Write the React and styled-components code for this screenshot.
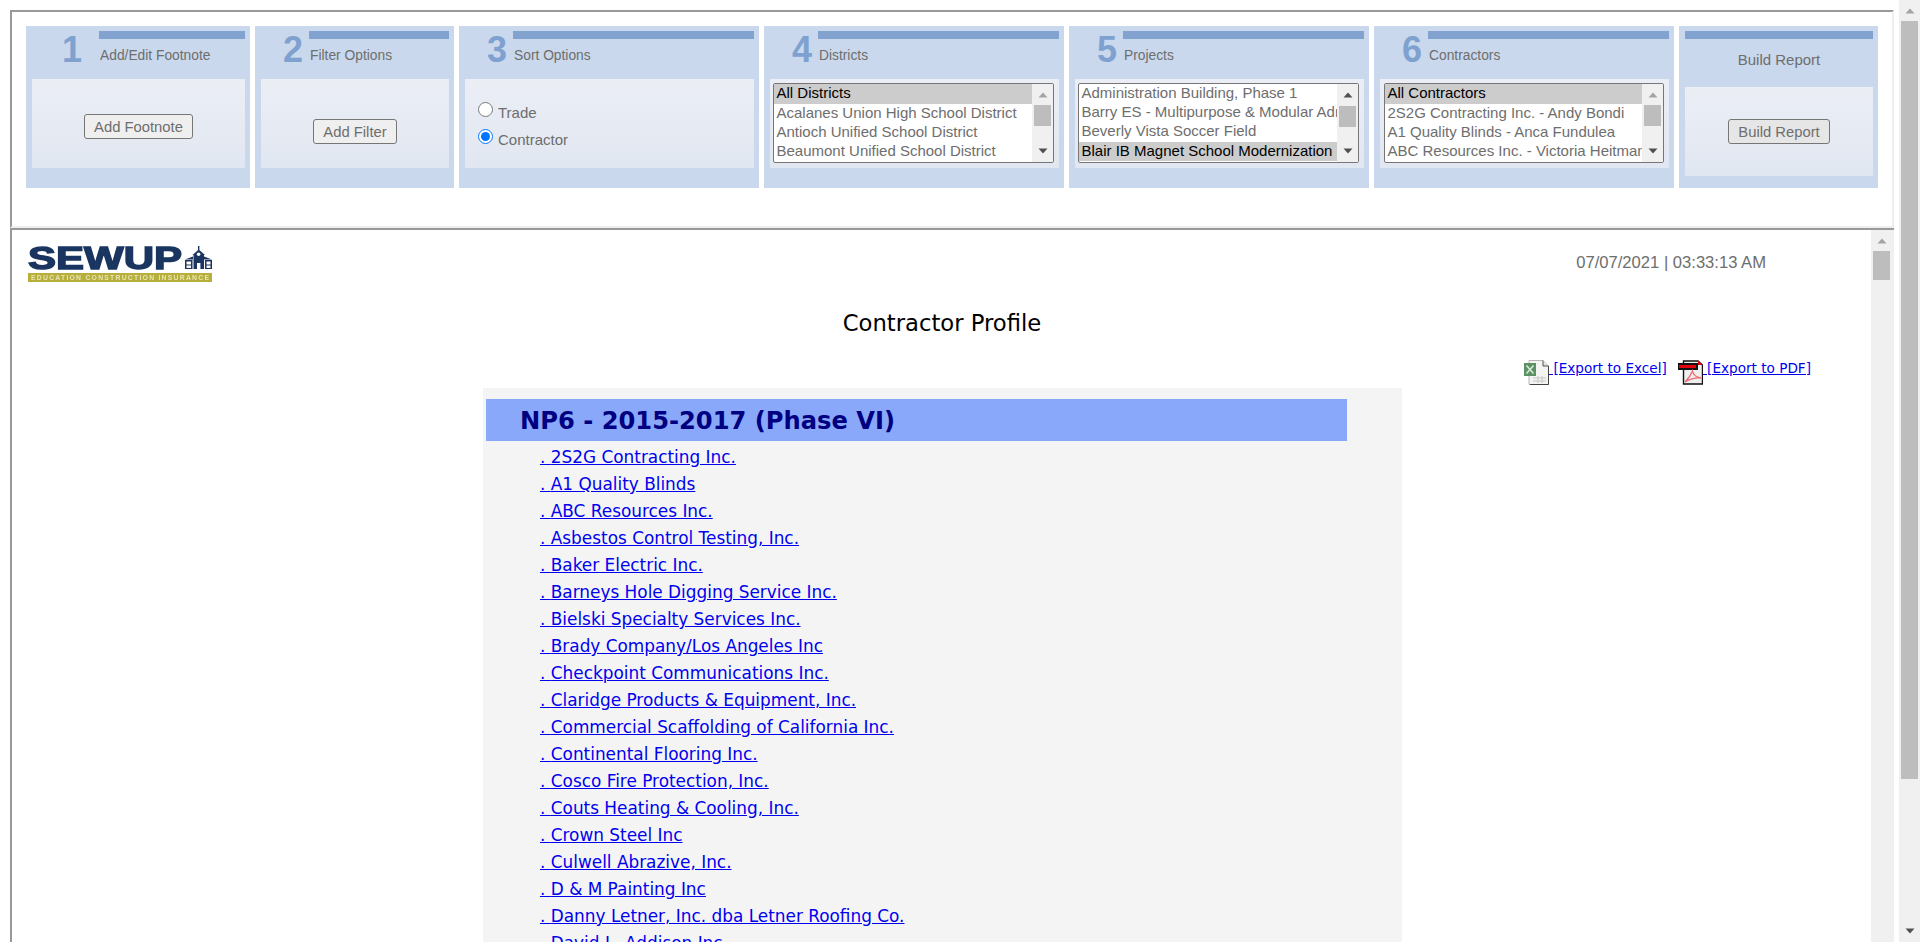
import styled, { createGlobalStyle } from "styled-components"

const GlobalStyle = createGlobalStyle`
html, body {
margin: 0;
padding: 0;
background: #FFFFFF;
overflow: hidden;
}
* {
box-sizing: border-box;
}
`

const ArrowIcon = ({ down, disabled }) => (
    <svg width="10" height="6" viewBox="0 0 10 6">
        <path d={down ? "M0.5 0.5H9.5L5 5.5Z" : "M0.5 5.5H9.5L5 0.5Z"} fill={disabled ? "#A3A3A3" : "#505050"} />
    </svg>
)

const Scrollbar = ({ width, thumbTop, thumbHeight, upDisabled, noDown }) => (
    <Track $width={width}>
        <TrackButton><ArrowIcon disabled={upDisabled} /></TrackButton>
        <Thumb $top={thumbTop} $height={thumbHeight} />
        <TrackSpacer />
        {!noDown && <TrackButton $bottom><ArrowIcon down /></TrackButton>}
    </Track>
)

const ListBox = ({ options, thumbTop, upDisabled }) => (
    <ListFrame>
        <ListOptions>
            {options.map((o) => (
                <ListOption key={o.text} $selected={o.selected} $tall={o.tall}>{o.text}</ListOption>
            ))}
        </ListOptions>
        <Scrollbar width={21} thumbTop={thumbTop} thumbHeight={21} upDisabled={upDisabled} />
    </ListFrame>
)

const StepPanel = ({ width, number, label, numberWidth, numberLeft, children }) => (
    <Panel $width={width}>
        <PanelHead>
            <StepNumber $width={numberWidth} $left={numberLeft}>{number}</StepNumber>
            <HeadText>
                <HeadBar />
                <HeadLabel>{label}</HeadLabel>
            </HeadText>
        </PanelHead>
        {children}
    </Panel>
)

const Logo = () => (
    <LogoSvg width="184" height="36" viewBox="0 0 184 36">
        <text x="0" y="23" fontFamily="Liberation Sans" fontWeight="700" fontSize="32" fill="#1A3560" stroke="#1A3560" strokeWidth="1.4" textLength="154" lengthAdjust="spacingAndGlyphs">SEWUP</text>
        <g fill="#1A3560">
            <rect x="170" y="0" width="1.4" height="4" />
            <path d="M164.5 9L170.7 3.5L177 9Z" />
            <rect x="165.5" y="9" width="10.5" height="14" />
            <path d="M157 13.5L165 10.5V13.5ZM184 13.5L176 10.5V13.5Z" />
            <rect x="157" y="14" width="7.5" height="9" />
            <rect x="177" y="14" width="7" height="9" />
        </g>
        <g fill="#FFFFFF">
            <rect x="168.8" y="6.5" width="3.6" height="3.6" rx="1.8" />
            <rect x="169" y="17" width="3.4" height="6" />
            <rect x="158.5" y="15.5" width="4.5" height="3" />
            <rect x="178.5" y="15.5" width="4" height="3" />
            <rect x="158.5" y="19.5" width="4.5" height="2.4" />
            <rect x="178.5" y="19.5" width="4" height="2.4" />
        </g>
        <rect x="0" y="27" width="184" height="9" fill="#B7AF3C" />
        <text x="3" y="34" fontFamily="Liberation Sans" fontWeight="700" fontSize="6.8" fill="#E8E4B0" textLength="178" lengthAdjust="spacing">EDUCATION CONSTRUCTION INSURANCE</text>
    </LogoSvg>
)

const ExcelIcon = () => (
    <svg width="25" height="25" viewBox="0 0 25 25">
        <path d="M5 0.5H19L24.5 6V24.5H5Z" fill="#F4F4F2" stroke="#B5B5B5" />
        <path d="M19 0.5V6H24.5" fill="#E2E2E2" stroke="#555555" />
        <path d="M24.5 6V24.5H6" fill="none" stroke="#444444" />
        <rect x="0" y="3" width="12" height="13" fill="#5C9263" />
        <path d="M2.5 5.5L9.5 13.5M9.5 5.5L2.5 13.5" stroke="#D8E8D8" strokeWidth="1.6" />
        <path d="M9 18H22M9 21H22M14 16V23M18 16V23" stroke="#C6C6C6" strokeWidth="1" />
    </svg>
)

const PdfIcon = () => (
    <svg width="25" height="25" viewBox="0 0 25 25">
        <path d="M5.5 1H20L24.5 5V24H5.5Z" fill="#EFEFEF" stroke="#111111" strokeWidth="1.4" />
        <path d="M20 0.5L24.5 5H20Z" fill="#E0000F" />
        <rect x="0" y="3" width="20" height="7" fill="#111111" />
        <rect x="1" y="5" width="17" height="3" fill="#E5000F" />
        <path d="M7 22C10 19 13 15 14.5 11C15 14 17 17 23 18C18 17.5 12 19 7 22Z" fill="none" stroke="#EE6B73" strokeWidth="1.3" />
    </svg>
)

const districts = [
    { text: "All Districts", selected: true, tall: true },
    { text: "Acalanes Union High School District" },
    { text: "Antioch Unified School District" },
    { text: "Beaumont Unified School District" },
]

const projects = [
    { text: "Administration Building, Phase 1" },
    { text: "Barry ES - Multipurpose & Modular Administration" },
    { text: "Beverly Vista Soccer Field", tall: true },
    { text: "Blair IB Magnet School Modernization", selected: true },
]

const contractorOptions = [
    { text: "All Contractors", selected: true, tall: true },
    { text: "2S2G Contracting Inc. - Andy Bondi" },
    { text: "A1 Quality Blinds - Anca Fundulea" },
    { text: "ABC Resources Inc. - Victoria Heitman" },
]

const contractors = [
    "2S2G Contracting Inc.",
    "A1 Quality Blinds",
    "ABC Resources Inc.",
    "Asbestos Control Testing, Inc.",
    "Baker Electric Inc.",
    "Barneys Hole Digging Service Inc.",
    "Bielski Specialty Services Inc.",
    "Brady Company/Los Angeles Inc",
    "Checkpoint Communications Inc.",
    "Claridge Products & Equipment, Inc.",
    "Commercial Scaffolding of California Inc.",
    "Continental Flooring Inc.",
    "Cosco Fire Protection, Inc.",
    "Couts Heating & Cooling, Inc.",
    "Crown Steel Inc",
    "Culwell Abrazive, Inc.",
    "D & M Painting Inc",
    "Danny Letner, Inc. dba Letner Roofing Co.",
    "David L. Addison Inc.",
]

const App = () => {
    return (
        <Page>
            <GlobalStyle />
            <Frames>
                <TopFrame>
                    <StepPanel width={224} number="1" label="Add/Edit Footnote" numberWidth={67} numberLeft={30}>
                        <PanelBody $top={35}>
                            <ActionButton>Add Footnote</ActionButton>
                        </PanelBody>
                    </StepPanel>
                    <StepPanel width={199} number="2" label="Filter Options" numberWidth={48} numberLeft={22}>
                        <PanelBody $top={40}>
                            <ActionButton>Add Filter</ActionButton>
                        </PanelBody>
                    </StepPanel>
                    <StepPanel width={300} number="3" label="Sort Options" numberWidth={48} numberLeft={22}>
                        <RadioBody>
                            <RadioRow>
                                <RadioInput type="radio" name="sort" readOnly />
                                <RadioText>Trade</RadioText>
                            </RadioRow>
                            <RadioRow>
                                <RadioInput type="radio" name="sort" defaultChecked />
                                <RadioText>Contractor</RadioText>
                            </RadioRow>
                        </RadioBody>
                    </StepPanel>
                    <StepPanel width={300} number="4" label="Districts" numberWidth={48} numberLeft={22}>
                        <ListBody $left={3}>
                            <ListBox options={districts} thumbTop={0} upDisabled />
                        </ListBody>
                    </StepPanel>
                    <StepPanel width={300} number="5" label="Projects" numberWidth={48} numberLeft={22}>
                        <ListBody $left={3}>
                            <ListBox options={projects} thumbTop={1} />
                        </ListBody>
                    </StepPanel>
                    <StepPanel width={300} number="6" label="Contractors" numberWidth={48} numberLeft={22}>
                        <ListBody $left={4}>
                            <ListBox options={contractorOptions} thumbTop={0} upDisabled />
                        </ListBody>
                    </StepPanel>
                    <Panel $width={199}>
                        <HeadBar />
                        <BuildTitle>Build Report</BuildTitle>
                        <PanelBody $top={32}>
                            <ActionButton $dark>Build Report</ActionButton>
                        </PanelBody>
                    </Panel>
                </TopFrame>
                <ReportFrame>
                    <ReportPane>
                        <ReportTop>
                            <Logo />
                            <DateText>07/07/2021 | 03:33:13 AM</DateText>
                        </ReportTop>
                        <ReportTitle>Contractor Profile</ReportTitle>
                        <ExportRow>
                            <ExportItem>
                                <ExcelIcon />
                                <ExportLink href="#">{"\u00a0[Export to Excel]"}</ExportLink>
                            </ExportItem>
                            <ExportItem>
                                <PdfIcon />
                                <ExportLink href="#">{"\u00a0[Export to PDF]"}</ExportLink>
                            </ExportItem>
                        </ExportRow>
                        <ReportBox>
                            <PhaseHeader>NP6 - 2015-2017 (Phase VI)</PhaseHeader>
                            <ContractorList>
                                {contractors.map((name) => (
                                    <ContractorRow key={name}>
                                        <ContractorLink href="#">. {name}</ContractorLink>
                                    </ContractorRow>
                                ))}
                            </ContractorList>
                        </ReportBox>
                    </ReportPane>
                    <Scrollbar width={23} thumbTop={0} thumbHeight={29} upDisabled noDown />
                </ReportFrame>
            </Frames>
            <Scrollbar width={21} thumbTop={0} thumbHeight={758} upDisabled />
        </Page>
    )
}
export default App

const Page = styled.div`
display: flex;
height: 942px;
padding-left: 10px;
gap: 5px;
background: #FFFFFF;
overflow: hidden;
`
const Frames = styled.div`
width: 1884px;
display: flex;
flex-direction: column;
`
const TopFrame = styled.div`
height: 218px;
margin-top: 10px;
display: flex;
align-items: flex-start;
gap: 5px;
padding: 14px 0 0 14px;
border-top: 2px solid #999999;
border-left: 2px solid #999999;
border-right: 2px solid #EEEEEE;
border-bottom: 2px solid #EEEEEE;
`
const ReportFrame = styled.div`
flex: 1;
min-height: 0;
display: flex;
border-top: 2px solid #999999;
border-left: 2px solid #999999;
`
const Track = styled.div`
width: ${(p) => p.$width}px;
flex-shrink: 0;
display: flex;
flex-direction: column;
padding-left: 2px;
background: #F0F0F0;
`
const TrackButton = styled.div`
width: 17px;
height: 21px;
flex-shrink: 0;
display: flex;
justify-content: center;
align-items: ${(p) => (p.$bottom ? "flex-start" : "center")};
padding-top: ${(p) => (p.$bottom ? "7px" : "0")};
`
const Thumb = styled.div`
width: 17px;
height: ${(p) => p.$height}px;
margin-top: ${(p) => p.$top}px;
flex-shrink: 0;
background: #BDBDBD;
`
const TrackSpacer = styled.div`
flex: 1;
`
const Panel = styled.div`
width: ${(p) => p.$width}px;
height: 162px;
flex-shrink: 0;
padding: 5px 5px 0 6px;
background: #C9D8EC;
font-family: "Liberation Sans", Arial, sans-serif;
color: #6E6E6E;
`
const PanelHead = styled.div`
height: 48px;
display: flex;
`
const StepNumber = styled.div`
width: ${(p) => p.$width}px;
padding-left: ${(p) => p.$left}px;
flex-shrink: 0;
font-size: 36px;
font-weight: 700;
line-height: 38px;
color: #7FA1D0;
`
const HeadText = styled.div`
flex: 1;
min-width: 0;
`
const HeadBar = styled.div`
height: 8px;
background: #82A3CF;
`
const HeadLabel = styled.div`
margin-top: 9px;
padding-left: 1px;
font-size: 13.8px;
line-height: 16px;
`
const BuildTitle = styled.div`
height: 48px;
padding-top: 12px;
font-size: 15px;
line-height: 17px;
text-align: center;
`
const PanelBody = styled.div`
height: 89px;
display: flex;
justify-content: center;
align-items: flex-start;
padding-top: ${(p) => p.$top}px;
background: linear-gradient(#EBEEF5, #E1E7F1);
`
const ActionButton = styled.button`
height: 25px;
padding: 0 9px;
border: 1px solid #767676;
border-radius: 3px;
background: ${(p) => (p.$dark ? "#E6E6E6" : "#EFEFEF")};
font-family: "Liberation Sans", Arial, sans-serif;
font-size: 14.8px;
color: #6E6E6E;
`
const RadioBody = styled.div`
height: 89px;
padding: 23px 0 0 13px;
background: linear-gradient(#EBEEF5, #E1E7F1);
`
const RadioRow = styled.label`
height: 27px;
display: flex;
align-items: flex-start;
`
const RadioInput = styled.input`
width: 15px;
height: 15px;
margin: 0 5px 0 0;
`
const RadioText = styled.span`
margin-top: 2px;
font-size: 15px;
line-height: 17px;
`
const ListBody = styled.div`
height: 89px;
padding: 4px 5px 0 ${(p) => p.$left}px;
background: linear-gradient(#EBEEF5, #E1E7F1);
`
const ListFrame = styled.div`
height: 80px;
display: flex;
border: 1px solid #767676;
border-radius: 2px;
background: #FFFFFF;
overflow: hidden;
`
const ListOptions = styled.div`
flex: 1;
min-width: 0;
`
const ListOption = styled.div`
height: ${(p) => (p.$tall ? "20px" : "19px")};
padding: 0 2.5px;
font-size: 15px;
line-height: 18px;
white-space: nowrap;
overflow: hidden;
color: ${(p) => (p.$selected ? "#000000" : "#6E6E6E")};
background: ${(p) => (p.$selected ? "#CCCCCC" : "transparent")};
`
const ReportPane = styled.div`
flex: 1;
min-width: 0;
padding-top: 16px;
overflow: hidden;
`
const ReportTop = styled.div`
height: 36px;
display: flex;
justify-content: space-between;
align-items: flex-start;
padding: 0 105px 0 16px;
`
const LogoSvg = styled.svg`
display: block;
filter: blur(0.45px);
`
const DateText = styled.div`
margin-top: 8px;
font-family: "Liberation Sans", Arial, sans-serif;
font-size: 16.6px;
line-height: 18px;
color: #6E6E6E;
`
const ReportTitle = styled.div`
margin-top: 28px;
padding-left: 1px;
font-family: "DejaVu Sans", Verdana, sans-serif;
font-size: 22.7px;
line-height: 26px;
text-align: center;
color: #000000;
`
const ExportRow = styled.div`
height: 25px;
margin-top: 24px;
padding-right: 60px;
display: flex;
justify-content: flex-end;
gap: 11px;
`
const ExportItem = styled.div`
display: flex;
align-items: flex-start;
`
const ExportLink = styled.a`
font-family: "DejaVu Sans", Verdana, sans-serif;
font-size: 13.6px;
line-height: 16px;
color: #0000EE;
text-decoration: underline;
`
const ReportBox = styled.div`
width: 919px;
margin: 3px 0 0 471px;
padding: 11px 0 0 3px;
background: #F4F4F4;
`
const PhaseHeader = styled.div`
width: 861px;
height: 42px;
padding-left: 34px;
font-family: "DejaVu Sans", Verdana, sans-serif;
font-size: 24.2px;
font-weight: 700;
line-height: 44px;
color: #000080;
background: #8AA8FA;
`
const ContractorList = styled.div`
margin-top: 3px;
padding-left: 54px;
`
const ContractorRow = styled.div`
height: 27px;
`
const ContractorLink = styled.a`
font-family: "DejaVu Sans", Verdana, sans-serif;
font-size: 16.9px;
line-height: 27px;
color: #0000EE;
text-decoration: underline;
`
